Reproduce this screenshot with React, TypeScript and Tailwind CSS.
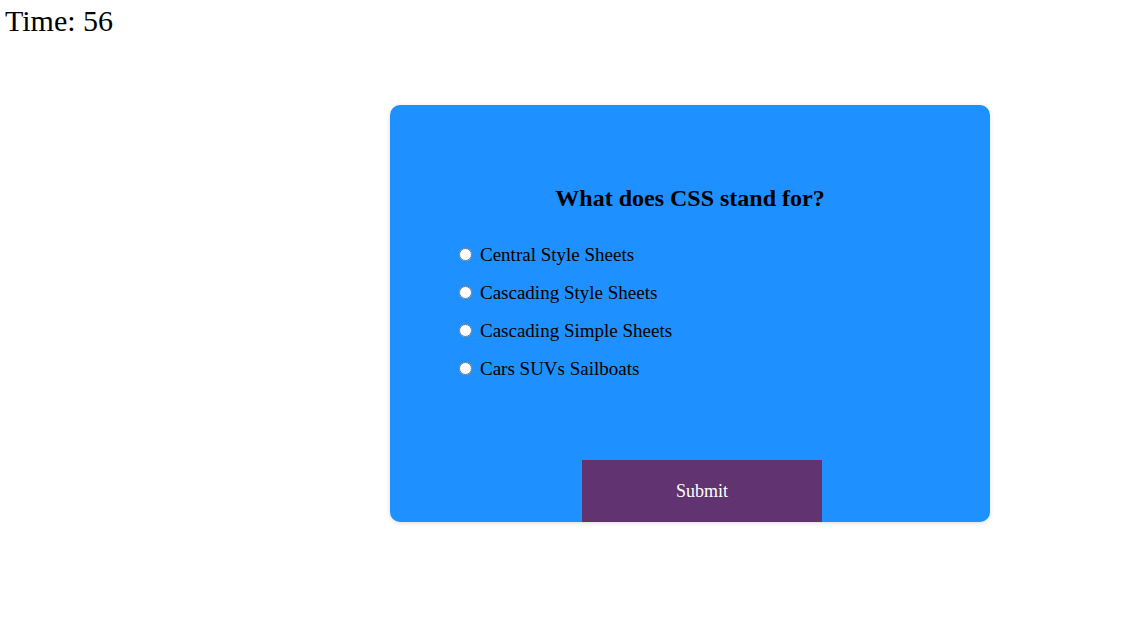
import { useState } from "react";

const options = [
  "Central Style Sheets",
  "Cascading Style Sheets",
  "Cascading Simple Sheets",
  "Cars SUVs Sailboats",
];

export default function App() {
  const [picked, setPicked] = useState<string | null>(null);

  return (
    <div className="min-h-[621px] bg-white font-['Liberation_Serif',serif] text-black">
      <div className="px-[5px] pt-[4px] text-[30px] leading-[34px]">Time: 56</div>

      <div className="ml-[390px] mt-[67px] flex h-[417px] w-[600px] flex-col rounded-[10px] bg-[#1e90ff] shadow-[0_1px_4px_rgba(0,0,0,0.15)]">
        <h2 className="mt-[79px] text-center text-[24px] font-bold leading-[28px]">
          What does CSS stand for?
        </h2>

        <div className="mt-[24px] flex flex-col pl-[69px]">
          {options.map((o) => (
            <label key={o} className="flex h-[38px] items-center text-[19px]">
              <input
                type="radio"
                name="q"
                checked={picked === o}
                onChange={() => setPicked(o)}
                className="mr-[8px] h-[13px] w-[13px] -translate-y-px"
              />
              {o}
            </label>
          ))}
        </div>

        <button className="mt-auto ml-[192px] h-[62px] w-[240px] bg-[#613370] text-[18px] text-white">
          Submit
        </button>
      </div>
    </div>
  );
}
